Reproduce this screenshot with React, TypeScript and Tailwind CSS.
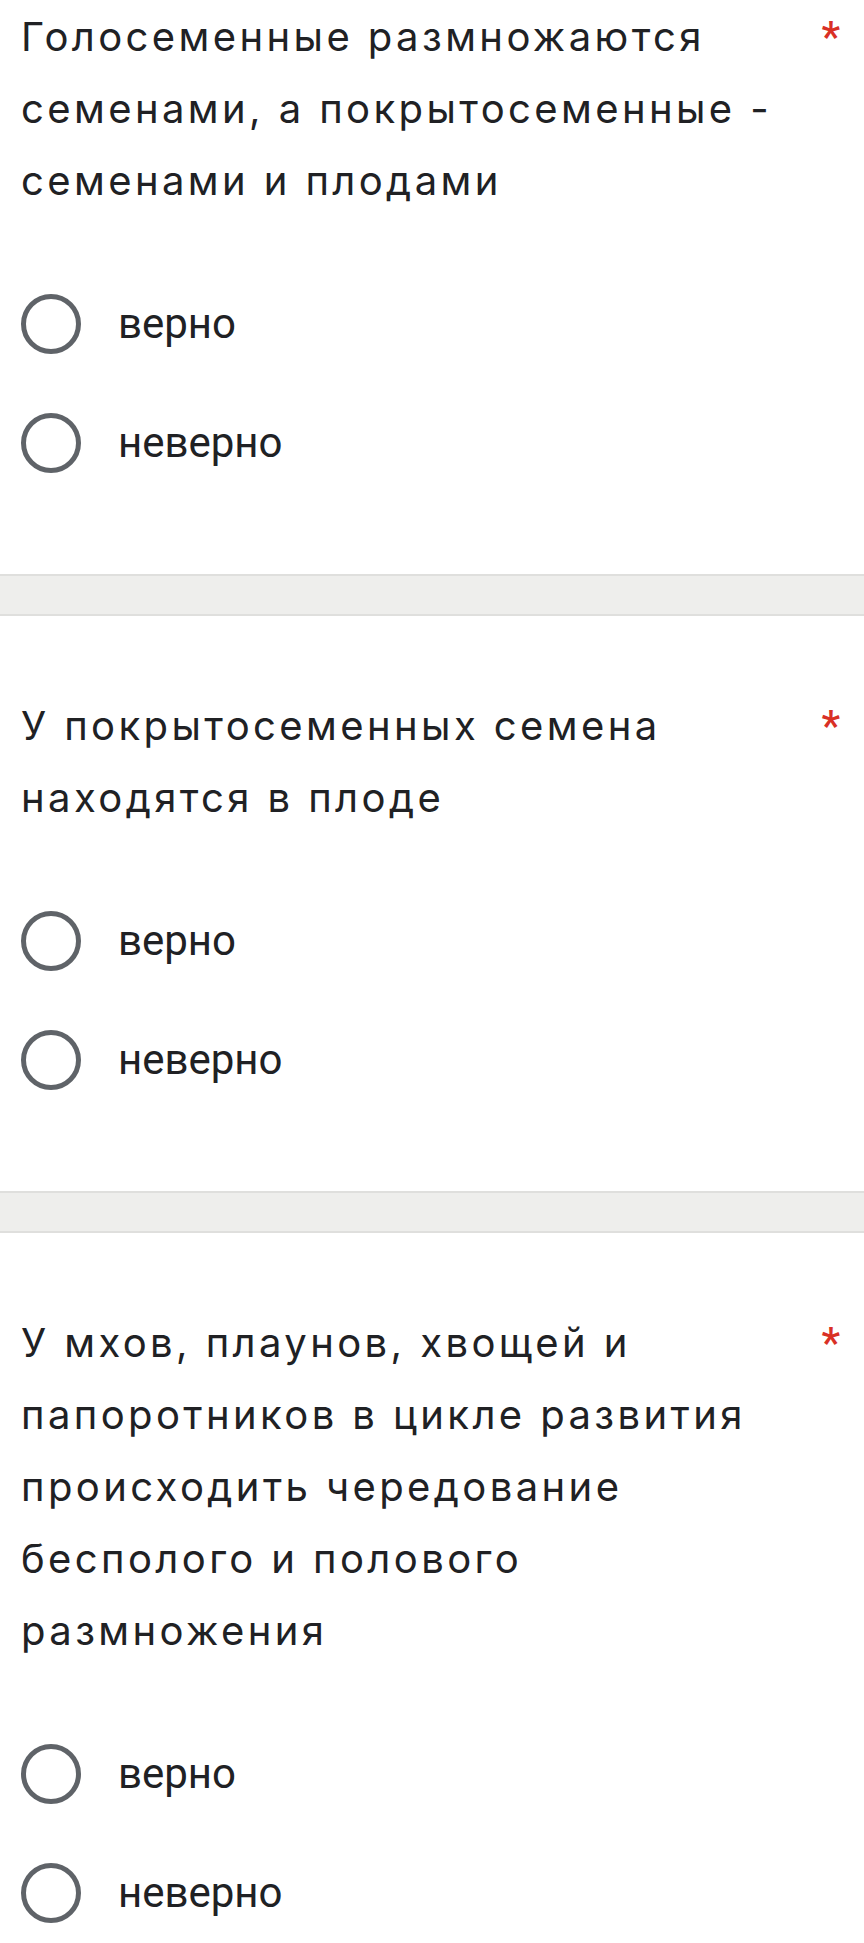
const questions = [
  { id: 1, title: 'Голосеменные размножаются семенами, а покрытосеменные - семенами и плодами' },
  { id: 2, title: 'У покрытосеменных семена находятся в плоде' },
  {
    id: 3,
    title:
      'У мхов, плаунов, хвощей и папоротников в цикле развития происходить чередование бесполого и полового размножения',
  },
];

const options = ['верно', 'неверно'];

const Radio = () => (
  <span className="block h-[60px] w-[60px] shrink-0 rounded-full border-[5px] border-[#5f6368]" />
);

const Question = ({ title, first }: { title: string; first?: boolean }) => (
  <section className={first ? 'pt-[1px] pb-[72px]' : 'pt-[74px] pb-[72px]'}>
    <div className="flex pl-[21px] pr-[24px]">
      <h2 className="w-[780px] font-['Inter',sans-serif] text-[40px] leading-[72px] font-normal tracking-[3.4px] text-[#202124]">
        {title}
      </h2>
      <span className="ml-auto font-['Roboto',sans-serif] text-[42px] leading-[72px] font-medium text-[#d93025]">*</span>
    </div>
    <div className="mt-[47px] flex flex-col">
      {options.map((opt) => (
        <label key={opt} className="flex h-[119px] items-center pl-[21px]">
          <Radio />
          <span className="ml-[37px] font-['Roboto',sans-serif] text-[42px] text-[#202124]">{opt}</span>
        </label>
      ))}
    </div>
  </section>
);

const Divider = () => (
  <div className="h-[42px] border-y-2 border-[#dfdfdd] bg-[#eeeeec]" />
);

export default function App() {
  return (
    <div className="min-h-screen bg-white">
      {questions.map((q, i) => (
        <div key={q.id}>
          {i > 0 && <Divider />}
          <Question title={q.title} first={i === 0} />
        </div>
      ))}
    </div>
  );
}
